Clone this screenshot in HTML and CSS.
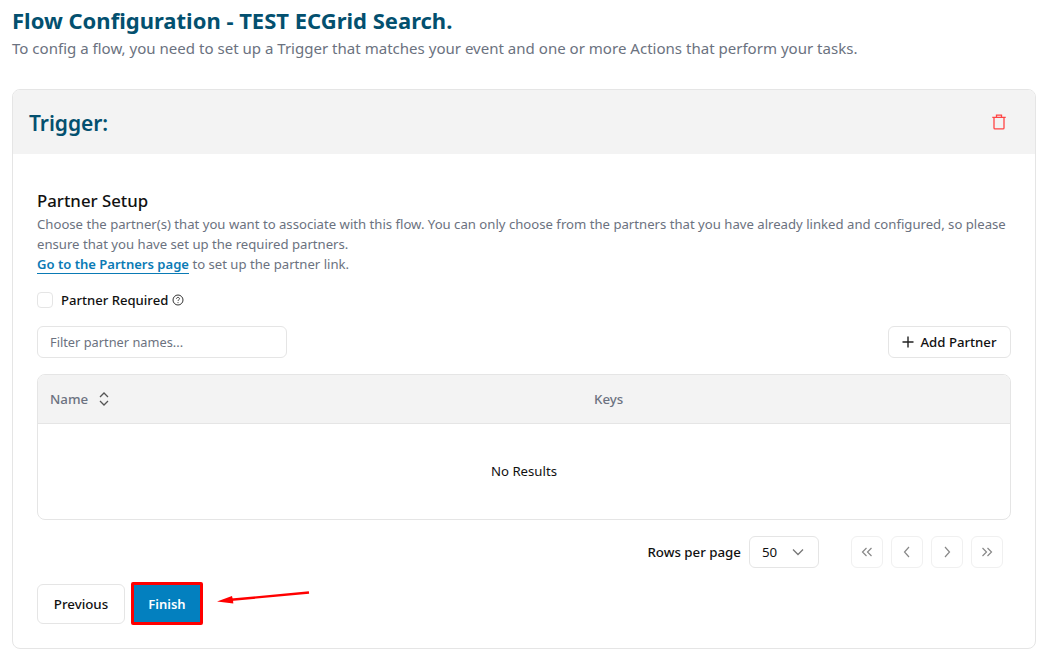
FILE: index.html
```html
<!DOCTYPE html>
<html lang="en">
<head>
<meta charset="utf-8">
<title>Flow Configuration</title>
<link rel="stylesheet" href="styles.css">
</head>
<body>
<main class="page">
  <h1 class="title">Flow Configuration - TEST ECGrid Search.</h1>
  <p class="subtitle">To config a flow, you need to set up a Trigger that matches your event and one or more Actions that perform your tasks.</p>
  <section class="card">
    <header class="card-head">
      <h2 class="card-title">Trigger:</h2>
      <button class="trash" aria-label="Delete">
        <svg width="16" height="16" viewBox="0 0 16 16" fill="none" stroke="#f44" stroke-width="1.3"><path d="M1.3 3.3h13.4"/><path d="M5.5 3.3V1.2h5v2.1"/><path d="M3 3.3v10.6c0 .6.5 1 1 1h8c.5 0 1-.4 1-1V3.3"/></svg>
      </button>
    </header>
    <div class="card-body">
      <h3 class="section-title">Partner Setup</h3>
      <p class="desc">Choose the partner(s) that you want to associate with this flow. You can only choose from the partners that you have already linked and configured, so please ensure that you have set up the required partners.<br><a class="link" href="#">Go to the Partners page</a> to set up the partner link.</p>
      <div class="check-row">
        <span class="checkbox"></span>
        <span class="check-label">Partner Required</span>
        <svg class="help" width="12" height="12" viewBox="0 0 12 12" fill="none" stroke="#333" stroke-width="1"><circle cx="6" cy="6" r="5"/><path d="M4.5 4.8c0-.9.7-1.4 1.5-1.4s1.5.5 1.5 1.3c0 1.1-1.5 1.1-1.5 2.2"/><path d="M6 8.2v.9"/></svg>
      </div>
      <div class="toolbar">
        <div class="filter">Filter partner names...</div>
        <button class="add-btn">
          <svg width="12" height="12" viewBox="0 0 12 12" fill="none" stroke="#222" stroke-width="1.4"><path d="M6 .5v11M.5 6h11"/></svg>
          Add Partner
        </button>
      </div>
      <div class="table">
        <div class="thead">
          <div class="th">Name
            <svg width="10" height="14" viewBox="0 0 10 14" fill="none" stroke="#555" stroke-width="1.3"><path d="M1 5l4-4 4 4M1 9l4 4 4-4"/></svg>
          </div>
          <div class="th">Keys</div>
        </div>
        <div class="tbody">No Results</div>
      </div>
      <div class="pager">
        <span class="rows-label">Rows per page</span>
        <div class="select">50
          <svg width="12" height="8" viewBox="0 0 12 8" fill="none" stroke="#777" stroke-width="1.3"><path d="M1 1.5l5 5 5-5"/></svg>
        </div>
        <div class="pages">
          <span class="page-btn"><svg width="12" height="10" viewBox="0 0 12 10" fill="none" stroke="#888" stroke-width="1.2"><path d="M5.5 1L1.5 5l4 4M10.5 1l-4 4 4 4"/></svg></span>
          <span class="page-btn"><svg width="8" height="12" viewBox="0 0 8 12" fill="none" stroke="#888" stroke-width="1.2"><path d="M6 1L1.5 6 6 11"/></svg></span>
          <span class="page-btn"><svg width="8" height="12" viewBox="0 0 8 12" fill="none" stroke="#888" stroke-width="1.2"><path d="M2 1l4.5 5L2 11"/></svg></span>
          <span class="page-btn"><svg width="12" height="10" viewBox="0 0 12 10" fill="none" stroke="#888" stroke-width="1.2"><path d="M1.5 1l4 4-4 4M6.5 1l4 4-4 4"/></svg></span>
        </div>
      </div>
      <div class="actions">
        <button class="btn-prev">Previous</button>
        <button class="btn-finish">Finish</button>
        <svg class="arrow" width="96" height="20" viewBox="0 0 96 20"><path d="M92 2.5L14 9.8" stroke="#f00" stroke-width="2.4" fill="none"/><path d="M0 11.5L15 6l1 4 .3 3.5z" fill="#f00"/></svg>
      </div>
    </div>
  </section>
</main>
</body>
</html>
```
FILE: styles.css
```css
* { box-sizing: border-box; }
html, body { margin: 0; background: #fff; }
body { font-family: "Noto Sans", sans-serif; color: #111; }
.page { padding: 5px 13px 0 12px; height: 664px; overflow: hidden; }
.title { margin: 0; font-size: 22px; line-height: 30px; font-weight: 700; color: #03506f; }
.subtitle { margin: 1px 0 0; font-size: 15.05px; line-height: 24px; color: #6b7280; }
.card { margin-top: 29px; border: 1px solid #e5e5e5; border-radius: 8px; height: 560px; overflow: hidden; }
.card-head { height: 64px; background: #f3f3f3; display: flex; align-items: center; justify-content: space-between; padding: 0 28px 0 16px; }
.card-title { margin: 0; font-size: 21px; font-weight: 600; letter-spacing: -0.05px; color: #03506f; position: relative; top: 1px; }
.trash { border: 0; background: none; padding: 0; display: flex; }
.card-body { padding: 36px 24px 0; }
.section-title { margin: 0; font-size: 16.8px; line-height: 22px; font-weight: 500; color: #111; }
.desc { margin: 2px 0 0; font-size: 13.15px; line-height: 20px; color: #6b7280; }
.link { color: #0a7ab5; font-weight: 600; font-size: 13.05px; text-decoration: none; border-bottom: 1px solid #0a7ab5; }
.check-row { display: flex; align-items: center; margin-top: 16px; height: 20px; }
.checkbox { width: 16px; height: 16px; border: 1px solid #e5e5e5; border-radius: 4px; }
.check-label { margin-left: 8px; font-size: 13.1px; font-weight: 500; }
.help { margin-left: 4px; }
.toolbar { display: flex; justify-content: space-between; margin-top: 16px; }
.filter { width: 250px; height: 32px; border: 1px solid #e5e5e5; border-radius: 6px; padding: 0 12px; font-size: 12.8px; line-height: 31px; color: #6b7280; }
.add-btn { height: 32px; width: 123px; border: 1px solid #e5e5e5; border-radius: 6px; background: #fff; font: 500 13.2px "Noto Sans", sans-serif; color: #111; display: flex; align-items: center; justify-content: center; gap: 6px; padding: 0; }
.table { margin-top: 16px; border: 1px solid #e5e5e5; border-radius: 8px; overflow: hidden; }
.thead { display: grid; grid-template-columns: 544px 1fr; height: 49px; background: #f3f3f3; border-bottom: 1px solid #e5e5e5; }
.th { font-size: 13.3px; font-weight: 500; color: #6b7280; display: flex; align-items: center; padding-left: 12px; gap: 11px; }
.tbody { height: 95px; display: flex; align-items: center; justify-content: center; font-size: 13.2px; padding-bottom: 2px; }
.pager { display: flex; align-items: center; justify-content: flex-end; margin-top: 16px; padding-right: 8px; }
.rows-label { font-size: 13.3px; font-weight: 500; }
.select { margin-left: 8px; width: 70px; height: 32px; border: 1px solid #e5e5e5; border-radius: 6px; font-size: 13.3px; display: flex; align-items: center; justify-content: space-between; padding: 0 14px 0 12px; }
.pages { display: flex; gap: 8px; margin-left: 32px; }
.page-btn { width: 32px; height: 32px; border: 1px solid #f0f0f0; border-radius: 6px; display: flex; align-items: center; justify-content: center; }
.actions { display: flex; align-items: center; margin-top: 14px; }
.btn-prev { width: 88px; height: 40px; border: 1px solid #e5e5e5; border-radius: 6px; background: #fff; font: 500 13.3px "Noto Sans", sans-serif; color: #111; padding: 0; }
.btn-finish { margin-left: 6px; width: 72px; height: 43px; border: 3px solid #f00; border-radius: 2px; background: #0380bf; color: #fff; font: 600 13px "Noto Sans", sans-serif; padding: 0; }
.arrow { margin-left: 14px; margin-top: -7px; }
```
